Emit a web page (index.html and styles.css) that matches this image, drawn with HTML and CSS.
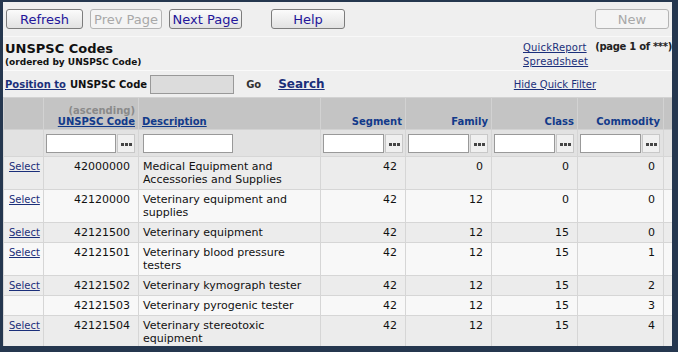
FILE: index.html
```html
<!DOCTYPE html>
<html lang="en">
<head>
    <meta charset="UTF-8">
    <title>UNSPSC Codes</title>
    <link rel="stylesheet" href="styles.css">
</head>
<body>
<div class="frame">

    <!-- Toolbar -->
    <div class="toolbar">
        <button class="btn btn-refresh">Refresh</button>
        <button class="btn btn-prev" disabled>Prev Page</button>
        <button class="btn btn-next">Next Page</button>
        <button class="btn btn-help">Help</button>
        <span class="spacer"></span>
        <button class="btn btn-new" disabled>New</button>
    </div>

    <!-- Title -->
    <div class="title-bar">
        <div class="title">
            <div class="title-main">UNSPSC Codes</div>
            <div class="title-sub">(ordered by UNSPSC Code)</div>
        </div>
        <div class="reports">
            <a href="#">QuickReport</a>
            <a href="#">Spreadsheet</a>
        </div>
        <div class="page-info">(page 1 of ***)</div>
    </div>

    <!-- Position row -->
    <div class="position-bar">
        <a href="#" class="pos-link">Position to</a>
        <span class="pos-label">UNSPSC Code</span>
        <input type="text" class="pos-input">
        <span class="go">Go</span>
        <a href="#" class="search-link">Search</a>
        <span class="spacer"></span>
        <a href="#" class="filter-link">Hide Quick Filter</a>
    </div>

    <!-- Grid -->
    <table class="grid">
        <colgroup>
            <col style="width:40px">
            <col style="width:95px">
            <col style="width:182px">
            <col style="width:85px">
            <col style="width:86px">
            <col style="width:86px">
            <col style="width:86px">
            <col style="width:9px">
        </colgroup>
        <tr class="head">
            <th></th>
            <th class="num"><span class="asc">(ascending)</span><br><a href="#">UNSPSC Code</a></th>
            <th class="left"><a href="#">Description</a></th>
            <th class="num">Segment</th>
            <th class="num">Family</th>
            <th class="num">Class</th>
            <th class="num">Commodity</th>
            <th></th>
        </tr>
        <tr class="filter">
            <td></td>
            <td><div class="qf"><input type="text" class="qf-code"><span class="dots"><i></i><i></i><i></i></span></div></td>
            <td><input type="text" class="qf-desc"></td>
            <td><div class="qf"><input type="text" class="qf-num"><span class="dots"><i></i><i></i><i></i></span></div></td>
            <td><div class="qf"><input type="text" class="qf-num"><span class="dots"><i></i><i></i><i></i></span></div></td>
            <td><div class="qf"><input type="text" class="qf-num"><span class="dots"><i></i><i></i><i></i></span></div></td>
            <td><div class="qf"><input type="text" class="qf-num"><span class="dots"><i></i><i></i><i></i></span></div></td>
            <td></td>
        </tr>
        <tr class="row odd">
            <td class="sel"><a href="#">Select</a></td>
            <td class="num">42000000</td>
            <td class="desc">Medical Equipment and Accessories and Supplies</td>
            <td class="num">42</td><td class="num">0</td><td class="num">0</td><td class="num">0</td><td></td>
        </tr>
        <tr class="row even">
            <td class="sel"><a href="#">Select</a></td>
            <td class="num">42120000</td>
            <td class="desc">Veterinary equipment and supplies</td>
            <td class="num">42</td><td class="num">12</td><td class="num">0</td><td class="num">0</td><td></td>
        </tr>
        <tr class="row odd">
            <td class="sel"><a href="#">Select</a></td>
            <td class="num">42121500</td>
            <td class="desc">Veterinary equipment</td>
            <td class="num">42</td><td class="num">12</td><td class="num">15</td><td class="num">0</td><td></td>
        </tr>
        <tr class="row even">
            <td class="sel"><a href="#">Select</a></td>
            <td class="num">42121501</td>
            <td class="desc">Veterinary blood pressure testers</td>
            <td class="num">42</td><td class="num">12</td><td class="num">15</td><td class="num">1</td><td></td>
        </tr>
        <tr class="row odd">
            <td class="sel"><a href="#">Select</a></td>
            <td class="num">42121502</td>
            <td class="desc">Veterinary kymograph tester</td>
            <td class="num">42</td><td class="num">12</td><td class="num">15</td><td class="num">2</td><td></td>
        </tr>
        <tr class="row even">
            <td class="sel"></td>
            <td class="num">42121503</td>
            <td class="desc">Veterinary pyrogenic tester</td>
            <td class="num">42</td><td class="num">12</td><td class="num">15</td><td class="num">3</td><td></td>
        </tr>
        <tr class="row odd">
            <td class="sel"><a href="#">Select</a></td>
            <td class="num">42121504</td>
            <td class="desc">Veterinary stereotoxic equipment</td>
            <td class="num">42</td><td class="num">12</td><td class="num">15</td><td class="num">4</td><td></td>
        </tr>
    </table>

</div>
</body>
</html>
```

FILE: styles.css
```css
/* Page frame */
body {
    margin: 0;
    background-color: #25374f;
    font-family: "DejaVu Sans", Verdana, sans-serif;
    overflow: hidden;
}

.frame {
    margin: 2px 6px 0 3px;
    width: 669px;
    height: 344px;
    background-color: #efefef;
    overflow: hidden;
}

a {
    color: #1b2f7a;
}

.spacer {
    flex: 1;
}

/* Toolbar */
.toolbar {
    display: flex;
    align-items: center;
    height: 34px;
    padding: 0 3px;
    background-color: #efefef;
    border-bottom: 1px solid #f8f8f8;
}

.btn {
    height: 20px;
    padding: 0;
    margin-right: 7px;
    font-family: "DejaVu Sans", Verdana, sans-serif;
    font-size: 13px;
    color: #24169a;
    background: linear-gradient(#fbfbfb, #e2e2e2);
    border: 1px solid #7c7c7c;
    border-radius: 3px;
}

.btn:disabled {
    color: #a8a8a8;
    border-color: #b4b4b4;
    background: #f4f4f4;
}

.btn-refresh { width: 77px; }
.btn-prev { width: 72px; }
.btn-next { width: 73px; margin-right: 29px; }
.btn-help { width: 74px; }
.btn-new { width: 74px; margin-right: 0; }

/* Title bar */
.title-bar {
    display: flex;
    align-items: flex-start;
    height: 29px;
    padding: 4px 0 0 2px;
    border-bottom: 1px solid #fafafa;
}

.title {
    flex: 1;
}

.title-main {
    font-size: 13px;
    font-weight: bold;
    color: #111;
}

.title-sub {
    font-size: 9px;
    font-weight: bold;
    color: #111;
    margin-top: 1px;
}

.reports {
    display: flex;
    flex-direction: column;
    gap: 3px;
    margin-top: 1px;
    font-size: 10px;
    letter-spacing: 0.2px;
}

.page-info {
    flex-shrink: 0;
    white-space: nowrap;
    margin: 0 0 0 7px;
    font-size: 10px;
    letter-spacing: -0.3px;
    font-weight: bold;
    color: #222;
}

/* Position row */
.position-bar {
    display: flex;
    align-items: center;
    height: 26px;
    padding: 0 76px 0 2px;
    font-size: 10px;
}

.pos-link {
    font-weight: bold;
}

.pos-label {
    font-weight: bold;
    color: #111;
    margin-left: 4px;
}

.pos-input {
    width: 82px;
    height: 17px;
    margin: 0 0 0 3px;
    padding: 0;
    border: 1px solid #999;
    background-color: #dcdcdc;
}

.go {
    margin-left: 12px;
    font-weight: bold;
    color: #333;
}

.search-link {
    margin-left: 17px;
    font-size: 12px;
    font-weight: bold;
}

.filter-link {
    font-size: 10px;
}

/* Grid */
.grid {
    border-collapse: collapse;
    table-layout: fixed;
    width: 669px;
    font-size: 11px;
}

.grid td, .grid th {
    border: 1px solid #d6d6d6;
    padding: 0;
}

.head th {
    height: 29px;
    background-color: #c4c4c4;
    vertical-align: bottom;
    font-size: 10px;
    color: #123a8a;
    padding: 0 3px 2px 3px;
    border-color: #d2d2d2;
}

.head th.num {
    text-align: right;
}

.head th.left {
    text-align: left;
}

.head a {
    color: #123a8a;
}

.asc {
    color: #8a8a8a;
}

.filter td {
    height: 26px;
    background-color: #e2e2e2;
    padding: 0 2px;
}

.qf {
    display: flex;
    align-items: center;
}

.filter input {
    height: 17px;
    padding: 0;
    margin: 0;
    border: 1px solid #999;
    background-color: #fff;
}

.qf-code { width: 68px; }
.qf-desc { width: 88px; margin-left: 2px !important; }
.qf-num { width: 59px; }

.dots {
    display: flex;
    align-items: center;
    justify-content: center;
    gap: 1px;
    width: 18px;
    height: 19px;
    margin-left: 1px;
    background-color: #f0f0f0;
    border: 1px solid #c8c8c8;
    box-sizing: border-box;
    padding-top: 3px;
}

.dots i {
    width: 3px;
    height: 3px;
    background-color: #444;
}

.row td {
    vertical-align: top;
    padding: 3px 8px 3px 4px;
    line-height: 13px;
    color: #111;
}

.row.odd td { background-color: #ececec; }
.row.even td { background-color: #f8f8f8; }

.row td.num {
    text-align: right;
}

.row td.sel {
    padding-left: 5px;
    font-size: 10px;
}

.row td.desc {
    padding-right: 6px;
}
```
